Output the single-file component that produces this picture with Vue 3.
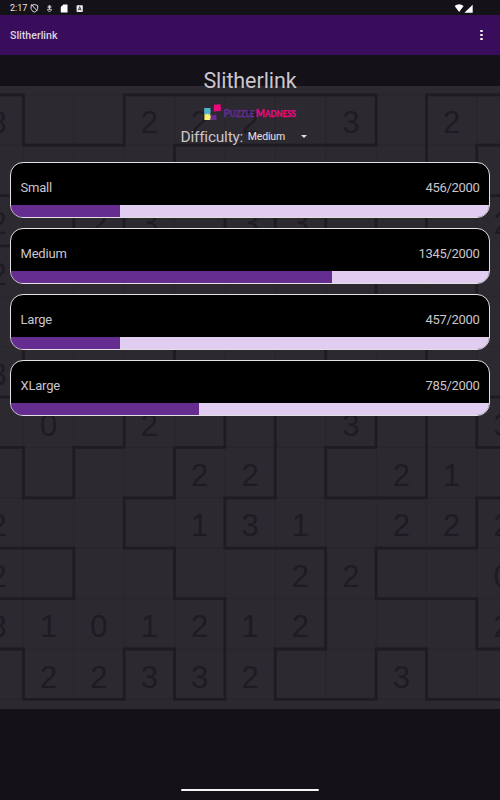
<template>
  <div class="screen">
    <svg class="backdrop" width="500" height="623" viewBox="0 86 500 623" aria-hidden="true">
      <rect x="0" y="86" width="500" height="623" fill="#2d2930" />
      <path class="grid-line" :d="gridPath" />
      <path class="loop-line" :d="loopPath" />
      <text
        v-for="clue in clues"
        :key="clue.key"
        class="clue"
        :x="clue.x"
        :y="clue.y"
      >{{ clue.value }}</text>
    </svg>

    <header class="status-bar">
      <span class="clock">2:17</span>
      <svg class="status-icons" width="56" height="14" viewBox="0 0 56 14">
        <g fill="none" stroke="#e4e1e6" stroke-width="1">
          <path d="M4.4 3.5 7.7 4.5v2.9c0 1.7-1.3 2.9-3.3 3.7-2-.8-3.3-2-3.3-3.7V4.5zM1.4 3.4l5.8 6.6" />
          <path d="M19.5 4v4.8M18.1 5.1h2.8v1.6h-2.8zM17.6 8.3c0 2.9 3.8 2.9 3.8 0z" stroke-width=".8" />
        </g>
        <path d="M33.4 3.5h4.1v8h-6.7V6.1z" fill="#fff" />
        <rect x="46.6" y="4.2" width="6.2" height="6.7" rx=".6" fill="#f0eef2" />
        <path d="M48.3 9.4 49.7 5.7 51.1 9.4M48.8 8.3h1.8" fill="none" stroke="#222" stroke-width=".8" />
      </svg>
      <svg class="signal-icons" width="20" height="14" viewBox="0 0 20 14">
        <path d="M.6 4.9Q5.1 1.7 9.6 4.9L5.1 11z" fill="#fff" />
        <path d="M18.7 3.7v8.1h-8.3z" fill="#fff" />
      </svg>
    </header>

    <div class="app-bar">
      <span class="app-title">Slitherlink</span>
      <button type="button" class="menu-btn" aria-label="Menu">
        <i></i><i></i><i></i>
      </button>
    </div>

    <main class="content">
      <h1 class="title">Slitherlink</h1>

      <svg class="logo" width="94" height="18" viewBox="0 0 94 18">
        <path d="M1.2 5h6.2v2.3l.7.7-.7.7v2.9H5.3l-.9-.8-.9.8H1.2z" fill="#4fb3d0" />
        <path d="M1.4 11.3h2.1l.9-.9.9.9h2.2v2l.9.8-.9.8V17H1.4z" fill="#f8f171" />
        <path d="M7.5 11.8h1.8l.9.8.9-.8h2.3V17H7.5v-2l.9-.9-.9-.8z" fill="#662d91" />
        <path d="M11.2 1.3l2.2.5 1.2-.6 1.1.3 2.2-.3-.4 2.1.6 1.3-.5 1.3.5 2-2.3-.2-1.2.7-1.2-.3-2.8 1 .6-2.5-1-.7.8-1.3z" fill="#ed0880" />
        <g class="logo-text">
          <text x="20.5" y="13.8" fill="#662d91" stroke="#662d91" textLength="31" lengthAdjust="spacingAndGlyphs">P<tspan class="small">UZZLE</tspan></text>
          <text x="52.8" y="13.8" fill="#ed0880" stroke="#ed0880" textLength="40.2" lengthAdjust="spacingAndGlyphs">M<tspan class="small">ADNESS</tspan></text>
        </g>
      </svg>

      <div class="difficulty-row">
        <span class="difficulty-label">Difficulty:</span>
        <button type="button" class="difficulty-select">
          <span>{{ difficulty }}</span>
          <i class="caret"></i>
        </button>
      </div>

      <section class="size-list">
        <article v-for="size in sizes" :key="size.name" class="size-card">
          <div class="size-row">
            <span class="size-name">{{ size.name }}</span>
            <span>{{ size.solved }}/{{ size.total }}</span>
          </div>
          <div class="progress">
            <div class="progress-fill" :style="{ width: fillWidth(size) }"></div>
          </div>
        </article>
      </section>
    </main>

    <div class="nav-handle"></div>
  </div>
</template>

<script setup>
import { ref } from 'vue'

const difficulty = ref('Medium')

const sizes = ref([
  { name: 'Small', solved: 456, total: 2000 },
  { name: 'Medium', solved: 1345, total: 2000 },
  { name: 'Large', solved: 457, total: 2000 },
  { name: 'XLarge', solved: 785, total: 2000 },
])

const fillWidth = (size) => `${(size.solved / size.total) * 100}%`

const CELL = 50.38
const colX = (col) => 23.4 + col * CELL
const rowY = (row) => 94.8 + row * CELL

// each row: [column, clue]; column -1 and 9 are cut off by the screen edge
const clueRows = {
  0: [[-1, 3], [2, 2], [3, 2], [4, 2], [6, 3], [8, 2]],
  2: [[-1, 2], [1, 2], [2, 3], [4, 3], [5, 3], [9, 2]],
  3: [[-1, 2]],
  5: [[-1, 3]],
  6: [[0, 0], [2, 2], [6, 3], [9, 3]],
  7: [[3, 2], [4, 2], [7, 2], [8, 1]],
  8: [[-1, 2], [3, 1], [4, 3], [5, 1], [7, 2], [8, 2], [9, 2]],
  9: [[-1, 2], [5, 2], [6, 2], [9, 0]],
  10: [[-1, 3], [0, 1], [1, 0], [2, 1], [3, 2], [4, 1], [5, 2], [9, 2]],
  11: [[0, 2], [1, 2], [2, 3], [3, 3], [4, 2], [7, 3]],
}

const clues = Object.entries(clueRows).flatMap(([row, items]) =>
  items.map(([col, value]) => ({
    key: `${row}:${col}`,
    value,
    x: colX(col + 0.5),
    y: rowY(Number(row) + 0.5) + 13.4,
  })),
)

// horizontal loop edges: grid line -> [from column, to column]
const horizontal = {
  0: [[-1, 0], [2, 7], [8, 10]],
  1: [[0, 2], [3, 7], [9, 10]],
  2: [[-1, 0], [9, 10]],
  3: [[-1, 0]],
  6: [[-1, 0], [9, 10]],
  7: [[-1, 0], [1, 2], [3, 4], [6, 7], [9, 10]],
  8: [[0, 1], [2, 3], [4, 5], [6, 8], [9, 10]],
  9: [[-1, 1], [2, 3], [4, 6], [7, 9]],
  10: [[-1, 1], [3, 4], [7, 9]],
  11: [[-1, 0], [2, 3], [5, 6], [7, 8], [9, 10]],
  12: [[0, 2], [3, 4], [5, 7], [8, 10]],
}

// vertical loop edges: row -> grid columns
const vertical = {
  0: [0, 2, 7, 8],
  1: [3, 8, 9],
  2: [1, 2, 4, 5, 6, 7, 8],
  3: [7, 9],
  5: [0, 3, 6, 8],
  6: [2, 4, 5, 7, 8, 9],
  7: [0, 1, 3, 5, 6, 8],
  8: [2, 4, 9],
  9: [1, 3, 6, 7],
  10: [4, 6, 9],
  11: [0, 2, 3, 4, 5, 7, 8],
}

const loopPath = [
  ...Object.entries(horizontal).flatMap(([row, edges]) =>
    edges.map(([from, to]) => `M${colX(from)} ${rowY(row)}H${colX(to)}`),
  ),
  ...Object.entries(vertical).flatMap(([row, cols]) =>
    cols.map((col) => `M${colX(col)} ${rowY(row)}v${CELL}`),
  ),
].join('')

const gridPath = [
  ...Array.from({ length: 13 }, (_, row) => `M0 ${rowY(row)}H500`),
  ...Array.from({ length: 10 }, (_, col) => `M${colX(col)} ${rowY(0)}V${rowY(12)}`),
].join('')
</script>

<style>
body {
  margin: 0;
  background: #141118;
}
</style>

<style scoped>
.screen {
  position: relative;
  display: flex;
  flex-direction: column;
  width: 500px;
  height: 800px;
  overflow: hidden;
  background: #141118;
  color: #cac5cd;
  font-family: Roboto, "Liberation Sans", sans-serif;
}

.backdrop {
  position: absolute;
  top: 86px;
  left: 0;
}

.grid-line {
  fill: none;
  stroke: #2a262d;
  stroke-width: 0.9;
}

.loop-line {
  fill: none;
  stroke: #1f1b22;
  stroke-width: 2.8;
  stroke-linecap: square;
}

.clue {
  fill: #1f1b22;
  font-family: "Liberation Sans", Arial, sans-serif;
  font-size: 31px;
  text-anchor: middle;
}

.status-bar {
  display: flex;
  align-items: center;
  flex: none;
  height: 15px;
  padding: 0 26px 0 10px;
}

.clock {
  width: 20px;
  color: #e4e1e6;
  font-size: 9px;
  line-height: 14px;
}

.status-icons {
  margin-right: auto;
}

.app-bar {
  display: flex;
  align-items: center;
  justify-content: space-between;
  flex: none;
  height: 40px;
  padding: 0 15.5px 0 10px;
  background: #390c5c;
}

.app-title {
  color: #dcd5e1;
  font-size: 10.6px;
  font-weight: 500;
}

.menu-btn {
  display: grid;
  gap: 1.5px;
  padding: 0 2px;
  border: none;
  background: none;
}

.menu-btn i {
  width: 2.6px;
  height: 2.6px;
  border-radius: 50%;
  background: #f4f0f6;
}

.content {
  position: relative;
  display: flex;
  flex-direction: column;
  align-items: center;
  padding: 12px 10px 0;
}

.title {
  margin: 0;
  font-size: 21.5px;
  font-weight: 400;
  letter-spacing: -0.08px;
  line-height: 28px;
}

.logo {
  display: block;
  margin-top: 8px;
}

.logo-text {
  font-family: Lato, sans-serif;
  font-size: 11px;
  font-weight: 700;
  stroke-width: 0.25;
}

.logo-text .small {
  font-size: 9px;
}

.difficulty-row {
  display: flex;
  align-items: center;
  gap: 4.6px;
  height: 30px;
  width: 320px;
  box-sizing: border-box;
  padding: 1px 0 0 90.5px;
}

.difficulty-label {
  font-size: 15.5px;
  letter-spacing: -0.22px;
}

.difficulty-select {
  display: flex;
  align-items: center;
  justify-content: space-between;
  width: 59.5px;
  padding: 0;
  border: none;
  background: none;
  color: #e4e0e6;
  font-family: inherit;
  font-size: 10.5px;
  letter-spacing: -0.15px;
}

.caret {
  border-top: 3.4px solid #e4e0e6;
  border-right: 3.4px solid transparent;
  border-left: 3.4px solid transparent;
}

.size-list {
  display: grid;
  gap: 10.2px;
  width: 100%;
  margin-top: 10.9px;
}

.size-card {
  box-sizing: border-box;
  height: 56px;
  overflow: hidden;
  border: 1px solid #e2e0e3;
  border-radius: 13px;
  background: #000;
}

.size-row {
  display: flex;
  align-items: center;
  justify-content: space-between;
  box-sizing: border-box;
  height: 42px;
  padding: 7px 9.5px 0 9.5px;
  font-size: 13px;
  letter-spacing: -0.3px;
}

.size-name {
  letter-spacing: -0.2px;
}

.progress {
  height: 12px;
  background: #e1cdf0;
}

.progress-fill {
  height: 100%;
  background: #652d90;
}

.nav-handle {
  width: 138px;
  height: 2.4px;
  margin: auto auto 8.6px;
  border-radius: 2px;
  background: #f5f5f5;
}
</style>
